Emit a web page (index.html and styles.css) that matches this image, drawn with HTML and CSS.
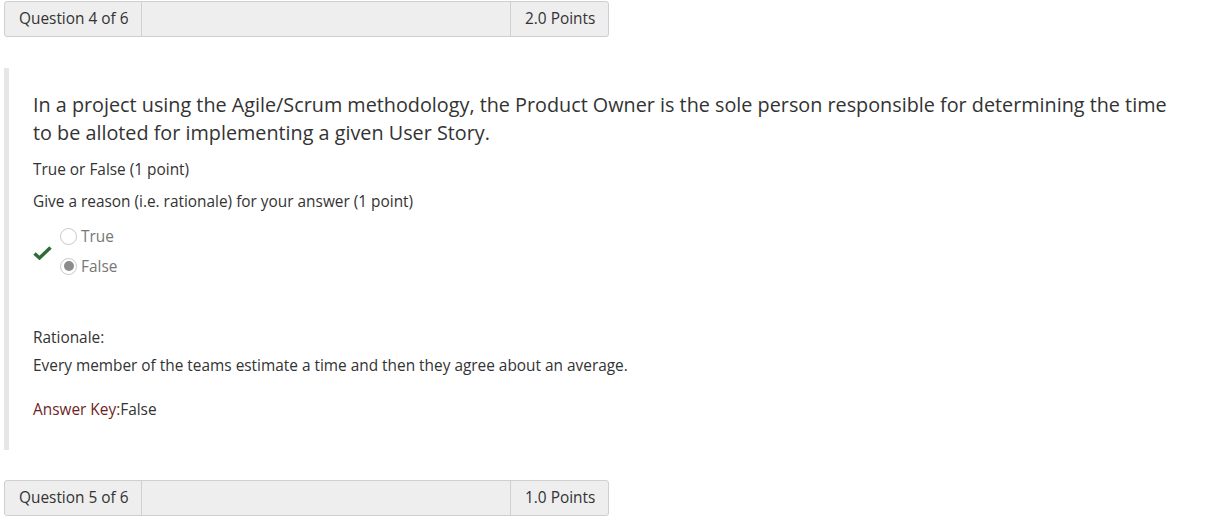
FILE: index.html
```html
<!DOCTYPE html>
<html>
<head>
<meta charset="utf-8">
<link rel="stylesheet" href="styles.css">
</head>
<body>
<div class="qhead qhead-top">
  <div class="cell num">Question 4 of 6</div>
  <div class="cell fill"></div>
  <div class="cell pts">2.0 Points</div>
</div>

<div class="qbody">
  <div class="qtext">In a project using the Agile/Scrum methodology, the Product Owner is the sole person responsible for determining the time to be alloted for implementing a given User Story.</div>
  <p class="sub sub1">True or False (1 point)</p>
  <p class="sub sub2">Give a reason (i.e. rationale) for your answer (1 point)</p>
  <div class="answers">
    <div class="mark">
      <svg width="19" height="14" viewBox="0 0 19 14"><path d="M1.5 7.5 L6.5 12 L17.5 1.5" fill="none" stroke="#2f6b36" stroke-width="3.4" stroke-linejoin="miter"/></svg>
    </div>
    <div class="opts">
      <div class="opt"><span class="radio"></span><span class="lbl">True</span></div>
      <div class="opt"><span class="radio checked"></span><span class="lbl">False</span></div>
    </div>
  </div>
  <p class="sub rlabel">Rationale:</p>
  <p class="sub rtext">Every member of the teams estimate a time and then they agree about an average.</p>
  <p class="sub key"><span class="keylbl">Answer Key:</span>False</p>
</div>

<div class="qhead qhead-bottom">
  <div class="cell num">Question 5 of 6</div>
  <div class="cell fill"></div>
  <div class="cell pts">1.0 Points</div>
</div>
</body>
</html>
```

FILE: styles.css
```css
html, body {
  margin: 0;
  padding: 0;
  background: #fff;
}
body {
  font-family: "Open Sans", "Noto Sans", sans-serif;
  color: #333;
  font-size: 15.4px;
}
.qhead {
  display: flex;
  width: 603px;
  height: 34px;
  margin-left: 4px;
  background: #eeeeee;
  border: 1px solid #cfcfcf;
  border-radius: 3px;
  box-sizing: content-box;
}
.qhead-top {
  margin-top: 1px;
}
.qhead-bottom {
  margin-top: 30px;
}
.cell {
  display: flex;
  align-items: center;
  font-size: 15.4px;
  color: #333;
  line-height: 20px;
  box-sizing: border-box;
}
.num {
  width: 137px;
  padding-left: 14px;
  border-right: 1px solid #d0d0d0;
}
.fill {
  flex: 1;
  border-right: 1px solid #d0d0d0;
}
.pts {
  width: 97px;
  padding-left: 14px;
}
.qbody {
  margin-top: 31px;
  margin-left: 4px;
  border-left: 5px solid #e6e6e6;
  padding: 23px 30px 28px 24px;
  width: 1146px;
  height: 331px;
}
.qtext {
  font-size: 19.8px;
  line-height: 28px;
  color: #333;
}
.sub {
  margin: 0;
  font-size: 15.4px;
  line-height: 20px;
  color: #333;
}
.sub1 {
  margin-top: 13px;
}
.sub2 {
  margin-top: 12px;
}
.answers {
  display: flex;
  align-items: center;
  margin-top: 14px;
}
.mark {
  width: 27px;
  display: flex;
  align-items: center;
  padding-top: 3px;
}
.opts {
  display: flex;
  flex-direction: column;
  gap: 10px;
}
.opt {
  display: flex;
  align-items: center;
  height: 20px;
}
.radio {
  width: 17px;
  height: 17px;
  border: 1px solid #c8c8c8;
  border-radius: 50%;
  box-sizing: border-box;
  background: #fff;
  margin-right: 4px;
  position: relative;
}
.radio.checked::after {
  content: "";
  position: absolute;
  left: 2.5px;
  top: 2.5px;
  width: 10px;
  height: 10px;
  border-radius: 50%;
  background: #8c8c8c;
}
.lbl {
  color: #777;
  font-size: 15.4px;
}
.rlabel {
  margin-top: 52px;
}
.rtext {
  margin-top: 8px;
}
.key {
  margin-top: 24px;
}
.keylbl {
  color: #6f1f1f;
}
```
